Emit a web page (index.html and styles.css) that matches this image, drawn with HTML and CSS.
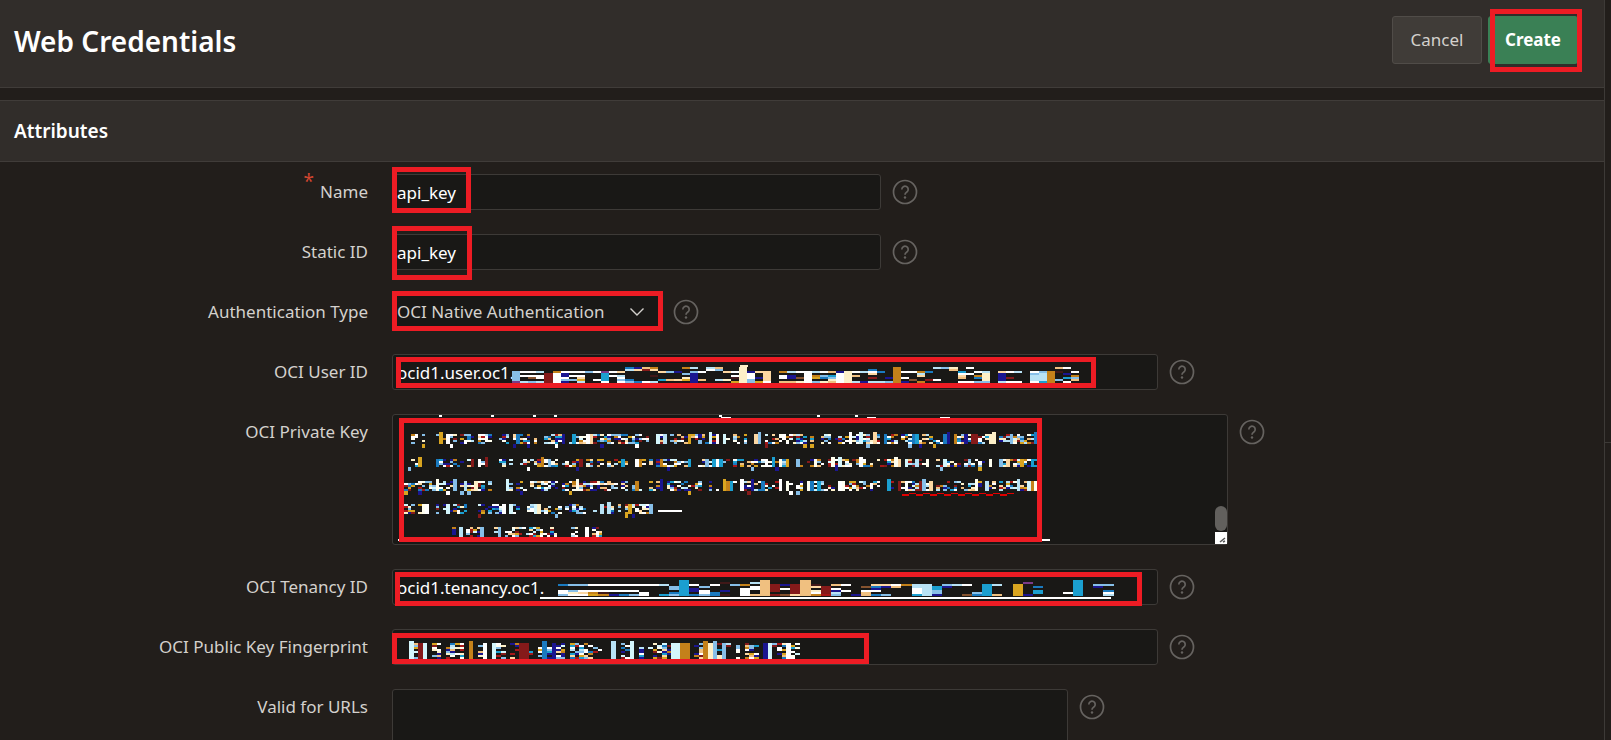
FILE: index.html
```html
<!DOCTYPE html>
<html lang="en">
<head>
<meta charset="utf-8">
<title>Web Credentials</title>
<link rel="stylesheet" href="styles.css">
</head>
<body>
<svg class="defs" aria-hidden="true">
  <symbol id="help" viewBox="0 0 26 26">
    <circle cx="13" cy="13" r="11.5" fill="none" stroke="currentColor" stroke-width="1.7"/>
    <path d="M9.800 10.400a3.200 3.200 0 1 1 5.100 2.600c-1.200.9-1.900 1.300-1.900 2.800" fill="none" stroke="currentColor" stroke-width="1.700"/>
    <circle cx="13" cy="18.500" r="1.200" fill="currentColor"/>
  </symbol>
</svg>
<div class="app">
  <main class="content">
    <header class="title-bar">
      <h1 class="title">Web Credentials</h1>
      <div class="actions">
        <button type="button" class="btn">Cancel</button>
        <span class="marked"><button type="button" class="btn btn-hot">Create</button><i class="mark mark-create"></i></span>
      </div>
    </header>
    <section class="region">
      <h2 class="region-title">Attributes</h2>
      <form class="form">
        <div class="row">
          <label class="label" for="name"><span class="required">*</span>Name</label>
          <div class="field w-medium"><input class="control" id="name" value="api_key"><i class="mark mark-name"></i></div>
          <button type="button" class="help" aria-label="Help: Name"><svg><use href="#help"/></svg></button>
        </div>
        <div class="row">
          <label class="label" for="static">Static ID</label>
          <div class="field w-medium"><input class="control" id="static" value="api_key"><i class="mark mark-static"></i></div>
          <button type="button" class="help" aria-label="Help: Static ID"><svg><use href="#help"/></svg></button>
        </div>
        <div class="row">
          <label class="label" for="auth">Authentication Type</label>
          <div class="field w-select">
            <select class="control select" id="auth"><option>OCI Native Authentication</option></select>
            <svg class="chevron" viewBox="0 0 16 10"><path d="M1.500 1.500l6.500 6.500 6.500-6.500" fill="none" stroke="currentColor" stroke-width="1.400"/></svg>
            <i class="mark mark-auth"></i>
          </div>
          <button type="button" class="help" aria-label="Help: Authentication Type"><svg><use href="#help"/></svg></button>
        </div>
        <div class="row">
          <label class="label" for="user">OCI User ID</label>
          <div class="field w-wide"><input class="control" id="user" value="ocid1.user.oc1."><svg class="mosaic" id="user-mosaic"></svg><i class="mark mark-user"></i></div>
          <button type="button" class="help" aria-label="Help: OCI User ID"><svg><use href="#help"/></svg></button>
        </div>
        <div class="row">
          <label class="label" for="key">OCI Private Key</label>
          <div class="field w-area">
            <textarea class="control area" id="key"></textarea>
            <svg class="mosaic" id="key-mosaic"></svg>
            <i class="mark mark-key"></i>
            <span class="thumb"></span>
            <svg class="grip" viewBox="0 0 12 12"><path fill="#fff" d="M0 0h12v12H0z"/><path d="M5 10l5-4M8 10l2-1" stroke="#555" stroke-width="1.500"/></svg>
          </div>
          <button type="button" class="help" aria-label="Help: OCI Private Key"><svg><use href="#help"/></svg></button>
        </div>
        <div class="row">
          <label class="label" for="tenancy">OCI Tenancy ID</label>
          <div class="field w-wide"><input class="control" id="tenancy" value="ocid1.tenancy.oc1."><svg class="mosaic" id="tenancy-mosaic"></svg><i class="mark mark-tenancy"></i></div>
          <button type="button" class="help" aria-label="Help: OCI Tenancy ID"><svg><use href="#help"/></svg></button>
        </div>
        <div class="row">
          <label class="label" for="finger">OCI Public Key Fingerprint</label>
          <div class="field w-wide"><input class="control" id="finger"><svg class="mosaic" id="finger-mosaic"></svg><i class="mark mark-finger"></i></div>
          <button type="button" class="help" aria-label="Help: OCI Public Key Fingerprint"><svg><use href="#help"/></svg></button>
        </div>
        <div class="row">
          <label class="label" for="urls">Valid for URLs</label>
          <div class="field w-urls"><textarea class="control area" id="urls"></textarea></div>
          <button type="button" class="help" aria-label="Help: Valid for URLs"><svg><use href="#help"/></svg></button>
        </div>
      </form>
    </section>
  </main>
  <aside class="side"><div class="side-top"></div></aside>
</div>
<script src="mosaic.js"></script>
</body>
</html>
```

FILE: styles.css
```css
* { box-sizing: border-box; }

body {
  margin: 0;
  background: #221e1b;
  color: #d4d1cd;
  font: 17px/24px "Noto Sans", "Open Sans", sans-serif;
}

button, input, select, textarea { font: inherit; color: inherit; }

.defs { display: none; }

.app { display: flex; height: 100vh; overflow: hidden; }
.content { flex: 1; min-width: 0; }

.side { width: 7px; border-left: 1px solid #3d3a37; }
.side-top { height: 443px; border-bottom: 1px solid #3d3a37; }

.title-bar {
  display: flex;
  justify-content: space-between;
  align-items: flex-start;
  height: 88px;
  padding: 16px 26px 0 14px;
  background: #312d2a;
  border-bottom: 1px solid #403c39;
}
.title { margin: 0; font-size: 28px; line-height: 50px; font-weight: 600; color: #fff; }

.actions { display: flex; gap: 6px; }
.btn {
  height: 48px;
  width: 90px;
  padding: 0;
  background: #403c38;
  border: 1px solid #504c48;
  border-radius: 3px;
}
.btn-hot { display: block; background: #3a8055; border-color: #3a8055; color: #fff; font-weight: 700; }
.marked { position: relative; }

.region { margin-top: 12px; border-top: 1px solid #403c39; }
.region-title {
  margin: 0;
  padding: 18px 14px;
  background: #312d2a;
  border-bottom: 1px solid #403c39;
  font-size: 19px;
  line-height: 24px;
  font-weight: 600;
  color: #fff;
}

.row { display: flex; align-items: flex-start; padding: 12px 0; }
.label { width: 368px; margin-right: 24px; line-height: 36px; text-align: right; }
.required { margin-right: 6px; color: #d0452f; font-size: 19px; position: relative; top: -10px; line-height: 24px; }

.field { position: relative; }
.control {
  display: block;
  width: 100%;
  height: 36px;
  margin: 0;
  padding: 0 4px;
  background: #191816;
  border: 1px solid #3d3a37;
  border-radius: 3px;
  color: #fff;
  outline: 0;
}
.select { appearance: none; color: #d4d1cd; }
.area { height: 131px; resize: none; }

.w-medium { width: 489px; }
.w-select { width: 270px; }
.w-wide { width: 766px; }
.w-area { width: 836px; }
.w-urls { width: 676px; }

.help {
  width: 26px;
  height: 26px;
  margin: 5px 0 0 11px;
  padding: 0;
  border: 0;
  background: none;
  color: #666360;
}
.help svg { display: block; width: 26px; height: 26px; }

.chevron { position: absolute; right: 17px; top: 13px; width: 16px; height: 10px; }
.thumb { position: absolute; right: 1px; top: 92px; width: 12px; height: 25px; border-radius: 6px; background: #62605d; }
.grip { position: absolute; right: 1px; top: 118px; width: 12px; height: 12px; }

.mosaic { position: absolute; left: 0; top: 0; width: 100%; height: 100%; overflow: hidden; pointer-events: none; }

.mark { position: absolute; border: 5px solid #ed1c24; pointer-events: none; }
.mark-create { left: 2px; top: -7px; width: 92px; height: 63px; }
.mark-name { left: 0; top: -7px; width: 79px; height: 46px; }
.mark-static { left: 0; top: -8px; width: 80px; height: 54px; }
.mark-auth { left: 0; top: -3px; width: 271px; height: 40px; }
.mark-user { left: 4px; top: 3px; width: 700px; height: 31px; }
.mark-key { left: 7px; top: 4px; width: 643px; height: 124px; }
.mark-tenancy { left: 3px; top: 3px; width: 747px; height: 34px; }
.mark-finger { left: 0; top: 4px; width: 477px; height: 31px; }
```

FILE: mosaic.js
```js
// Paints the pixelated blocks that hide the secret values.
const COLORS = {
  w: '#ffffff', l: '#87bfe8', c: '#1b9fd0', b: '#1a7abf', n: '#1b1690', r: '#851a1a',
  R: '#a81818', o: '#c4811a', y: '#d9a520', p: '#fcd7a2', k: '#fdf0c8', i: '#b8e2f5',
  q: '#7a3a88', d: '#85532f', t: '#f0c080', m: '#401818', a: '#fffff0', e: '#d4f6fc'
};

function rect(svg, x, y, w, h, key) {
  const r = document.createElementNS('http://www.w3.org/2000/svg', 'rect');
  r.setAttribute('x', x);
  r.setAttribute('y', y);
  r.setAttribute('width', w);
  r.setAttribute('height', h);
  r.setAttribute('fill', COLORS[key] || key);
  r.setAttribute('shape-rendering', 'crispEdges');
  svg.appendChild(r);
}

// Each entry is one column, read from top to bottom in 2px cells.
function columns(svg, x, y, step, list) {
  list.forEach((col, n) => {
    [...col].forEach((key, row) => {
      if (key !== '.') rect(svg, x + n * step, y + row * 2, step, 2, key);
    });
  });
}

const user = document.getElementById('user-mosaic');
columns(user, 120, 13, 8.1, ('..lllllq ..w.w..i ..w.wd.l ..i.ww.i ...rrrrr ..owwwww ..wnnwln ..w.w.l. ..w.wpyi ..l..... ' +
  '..w...w. ..qccccw ..w.w... ..p.iwlw bi....bl np.....b tr.....w op..m..i ..p...c. ..l...t. ..n...p. o..l.ky. i.lnnnnn ' +
  '..w...t. iw...... tl....i. ..p...k. ..w.wm.y kkkkkkkk ..nwwwll ..p..n.y ..pppppw ........ ..o.ww.t ..i.nn.t ..w..d.k ..wwwwww ' +
  '..i.oy.l ..w.lb.k ..t.clkt ..nwwwww ..kkkkkk ..w.t..i ..i....n .bwp.r.i ..b....i .....n.l oooooooo ..w..w.n ..w...d. ' +
  '..oip..o ..b...r. i.....w. l....... kt...... ..cwpt.w w..w...w ..w.ob.l ..ikkkkl ........ ..pnnnni ..w..r.w ..i....w ' +
  '........ ..wliiiw ..liiiic ..oooooo t.m...l. w..n.c.w ..w.olt.').split(' '));
rect(user, 348, 11, 8, 2, 'k');

const tenancy = document.getElementById('tenancy-mosaic');
columns(tenancy, 166, 11, 10.1, ('..b..wwl ..l..lkw ..l..wpw ..w..woy ..w..wmo ..w..w.n ..w..w.b ..w..w.l ..w...ww ..w..... ' +
  '..i....c ...ll.bl cccccccc ..w.nn.b ...l.wwl ..w...bb .m...n.m ..l..... ..o.wwww .i.ww..t tttttttt ..rrrr.r ..n.w..d ' +
  '..rrrrrp tttttttt ..mp.kwo ...rrrrR ..t.wnil ..w..w.. .......n ...d.wtt ..pbnw.b ..pn...l ..wt.... ..o..... ..iiwwwc ' +
  '..iiiiii ...cclln ..ln.... ..i..... ..w....d ......lb ..cccccc ..i....t ........ ..yyyyyy .q.....n ...b.cc. ........ ' +
  '........ ......w. cccccccc ........ ..ln.... ..l..bwi').split(' '));
rect(tenancy, 148, 28, 571, 2, 'w');

let seed = 41;
function rand() {
  seed = (seed * 16807) % 2147483647;
  return seed / 2147483647;
}
function pick(s) { return s[Math.floor(rand() * s.length)]; }

function textLine(svg, x0, x1, y, cell, rows, gaps) {
  for (let x = x0; x < x1; x += cell) {
    if (gaps.some(g => x >= g[0] && x < g[1])) continue;
    const w = Math.min(cell, x1 - x);
    const kind = rand();
    if (kind < 0.16) continue;
    if (kind < 0.34) {
      const up = rand() < 0.3 ? 1 : 0;
      rect(svg, x, y - 2 * up, w, 2 * (rows + up), pick('wwaeeklicbnroyp'));
      continue;
    }
    for (let r = 0; r < rows; r++) {
      if (rand() < 0.55) rect(svg, x, y + 2 * r, w, 2, pick('wwwallieknnrRoyptbc'));
    }
    if (rand() < 0.07) rect(svg, x, y + 2 * rows, w, 4, pick('nlwyr'));
  }
}

const key = document.getElementById('key-mosaic');
textLine(key, 12, 645, 20, 3.5, 5, [[32, 41], [98, 105]]);
textLine(key, 12, 645, 45, 3.5, 4, [[27, 42], [95, 105]]);
textLine(key, 12, 645, 67, 3.5, 5, [[62, 68], [97, 111], [491, 495]]);
textLine(key, 12, 268, 90, 3.5, 5, [[35, 42], [168, 173]]);
rect(key, 266, 96, 24, 2, 'w');
textLine(key, 60, 210, 113, 3.5, 5, [[91, 102], [164, 178], [185, 192]]);
[47, 99, 141, 162, 327, 425, 463].forEach(x => rect(key, x, 1, 3, 2, 'w'));
[[329, 10], [475, 9], [548, 10]].forEach(p => rect(key, p[0], 3, p[1], 1, 'w'));
rect(key, 650, 125, 8, 2, 'w');
rect(key, 6, 125, 2, 2, 'w');
for (let x = 510; x < 612; x += 14) {
  rect(key, x, 80, 7, 2, '#e00000');
  rect(key, x + 7, 79, 7, 1, '#e00000');
}

const finger = document.getElementById('finger-mosaic');
textLine(finger, 17, 410, 14, 4.6, 8, [[35, 39]]);
```
